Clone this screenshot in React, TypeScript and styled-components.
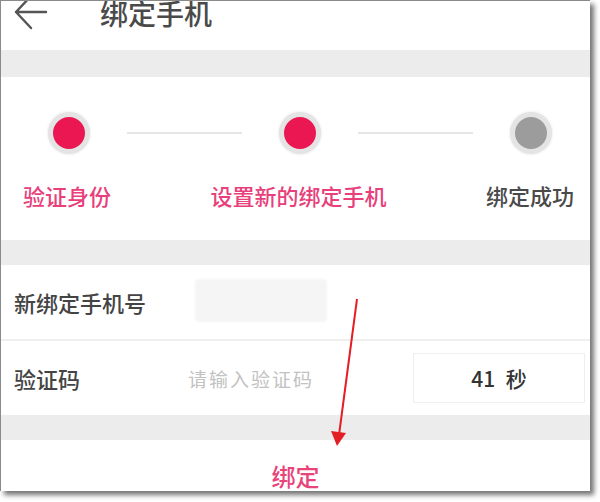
import styled, { createGlobalStyle } from 'styled-components';

const GlobalStyle = createGlobalStyle`
  * {
    box-sizing: border-box;
  }
  body {
    margin: 0;
    background: #ffffff;
    font-family: 'Noto Sans CJK SC', 'Noto Sans', sans-serif;
  }
`;

const steps = [
  { label: '验证身份', done: true },
  { label: '设置新的绑定手机', done: true },
  { label: '绑定成功', done: false },
];

export default function App() {
  return (
    <>
      <GlobalStyle />
      <Page>
        <Frame>
          <Header>
            <BackIcon width="40" height="34" viewBox="0 0 40 34">
              <path d="M34 13 H4 M19 -3 L4 13 L19 29" />
            </BackIcon>
            <Title>绑定手机</Title>
          </Header>
          <Band $height={27} />

          <StepsPanel>
            <DotsRow>
              {steps.map((step, i) => (
                <>
                  {i > 0 && <Connector key={`line-${i}`} />}
                  <Dot key={`dot-${i}`} $active={step.done} />
                </>
              ))}
            </DotsRow>
            <LabelsRow>
              {steps.map((step) => (
                <StepLabel key={step.label} $active={step.done}>
                  {step.label}
                </StepLabel>
              ))}
            </LabelsRow>
          </StepsPanel>
          <Band $height={25} />

          <FormRow>
            <FieldLabel>新绑定手机号</FieldLabel>
            <MaskedInput />
          </FormRow>
          <Divider />
          <FormRow $height={74}>
            <FieldLabel>验证码</FieldLabel>
            <Placeholder>请输入验证码</Placeholder>
            <Countdown>41 秒</Countdown>
          </FormRow>
          <Band $height={25} />

          <SubmitArea>
            <SubmitText>绑定</SubmitText>
          </SubmitArea>

          <Annotation width="589" height="490" viewBox="0 0 589 490">
            <line x1="356" y1="298" x2="338" y2="434" />
            <polygon points="330,430 345,432 336,445" />
          </Annotation>
        </Frame>
      </Page>
    </>
  );
}

const Page = styled.div`
  width: 600px;
  height: 502px;
  background: #ffffff;
`;

const Frame = styled.div`
  position: relative;
  width: 590px;
  height: 491px;
  border-top: 1px solid #8a8a8a;
  border-left: 1px solid #8a8a8a;
  background: #ffffff;
  box-shadow: 4px 4px 5px rgba(0, 0, 0, 0.55);
  overflow: hidden;
  display: flex;
  flex-direction: column;
`;

const Header = styled.div`
  height: 49px;
  display: flex;
  align-items: flex-start;
  padding-left: 11px;
  flex-shrink: 0;
`;

const BackIcon = styled.svg`
  margin-top: -2px;
  fill: none;
  stroke: #555555;
  stroke-width: 2.4;
  stroke-linecap: round;
  stroke-linejoin: round;
`;

const Title = styled.div`
  margin-left: 48px;
  margin-top: -4px;
  font-size: 28px;
  line-height: 32px;
  font-weight: 500;
  color: #4a4a4a;
`;

const Band = styled.div<{ $height: number }>`
  height: ${({ $height }) => $height}px;
  background: #ececec;
  flex-shrink: 0;
`;

const StepsPanel = styled.div`
  height: 163px;
  flex-shrink: 0;
  padding-top: 35px;
`;

const DotsRow = styled.div`
  display: flex;
  align-items: center;
  padding: 0 38px 0 47px;
`;

const Dot = styled.div<{ $active: boolean }>`
  width: 42px;
  height: 42px;
  border-radius: 50%;
  flex-shrink: 0;
  border: 5px solid #e4e4e4;
  background: ${({ $active }) => ($active ? '#ea1753' : '#9c9c9c')};
  box-shadow: 0 0 3px rgba(0, 0, 0, 0.12);
`;

const Connector = styled.div`
  flex: 1;
  height: 2px;
  margin: 0 37px;
  background: #e6e6e6;
`;

const LabelsRow = styled.div`
  display: flex;
  justify-content: space-between;
  margin-top: 27px;
  padding: 0 16px 0 22px;
`;

const StepLabel = styled.div<{ $active: boolean }>`
  font-size: 22px;
  line-height: 28px;
  font-weight: 500;
  color: ${({ $active }) => ($active ? '#e8407a' : '#4a4a4a')};
`;

const FormRow = styled.div<{ $height?: number }>`
  height: ${({ $height }) => $height ?? 74}px;
  display: flex;
  align-items: center;
  padding: 0 5px 0 13px;
  flex-shrink: 0;
`;

const FieldLabel = styled.div`
  font-size: 22px;
  font-weight: 500;
  color: #444444;
  width: 172px;
  flex-shrink: 0;
`;

const MaskedInput = styled.div`
  width: 132px;
  height: 43px;
  margin-top: -4px;
  margin-left: 9px;
  border-radius: 4px;
  background: #f5f5f5;
  filter: blur(1px);
`;

const Divider = styled.div`
  height: 2px;
  background: #efefef;
  flex-shrink: 0;
`;

const Placeholder = styled.div`
  flex: 1;
  font-size: 19px;
  letter-spacing: 2px;
  color: #c2c2c2;
  padding-left: 2px;
`;

const Countdown = styled.div`
  width: 172px;
  height: 50px;
  display: flex;
  align-items: center;
  justify-content: center;
  border: 1px solid #efefef;
  font-size: 21px;
  font-weight: 500;
  color: #333333;
  word-spacing: 6px;
`;

const SubmitArea = styled.div`
  flex: 1;
  display: flex;
  justify-content: center;
  padding-top: 22px;
`;

const SubmitText = styled.div`
  font-size: 24px;
  line-height: 28px;
  font-weight: 500;
  color: #e8437a;
`;

const Annotation = styled.svg`
  position: absolute;
  left: 0;
  top: 0;
  pointer-events: none;
  line {
    stroke: #e31e24;
    stroke-width: 2;
  }
  polygon {
    fill: #e31e24;
  }
`;
